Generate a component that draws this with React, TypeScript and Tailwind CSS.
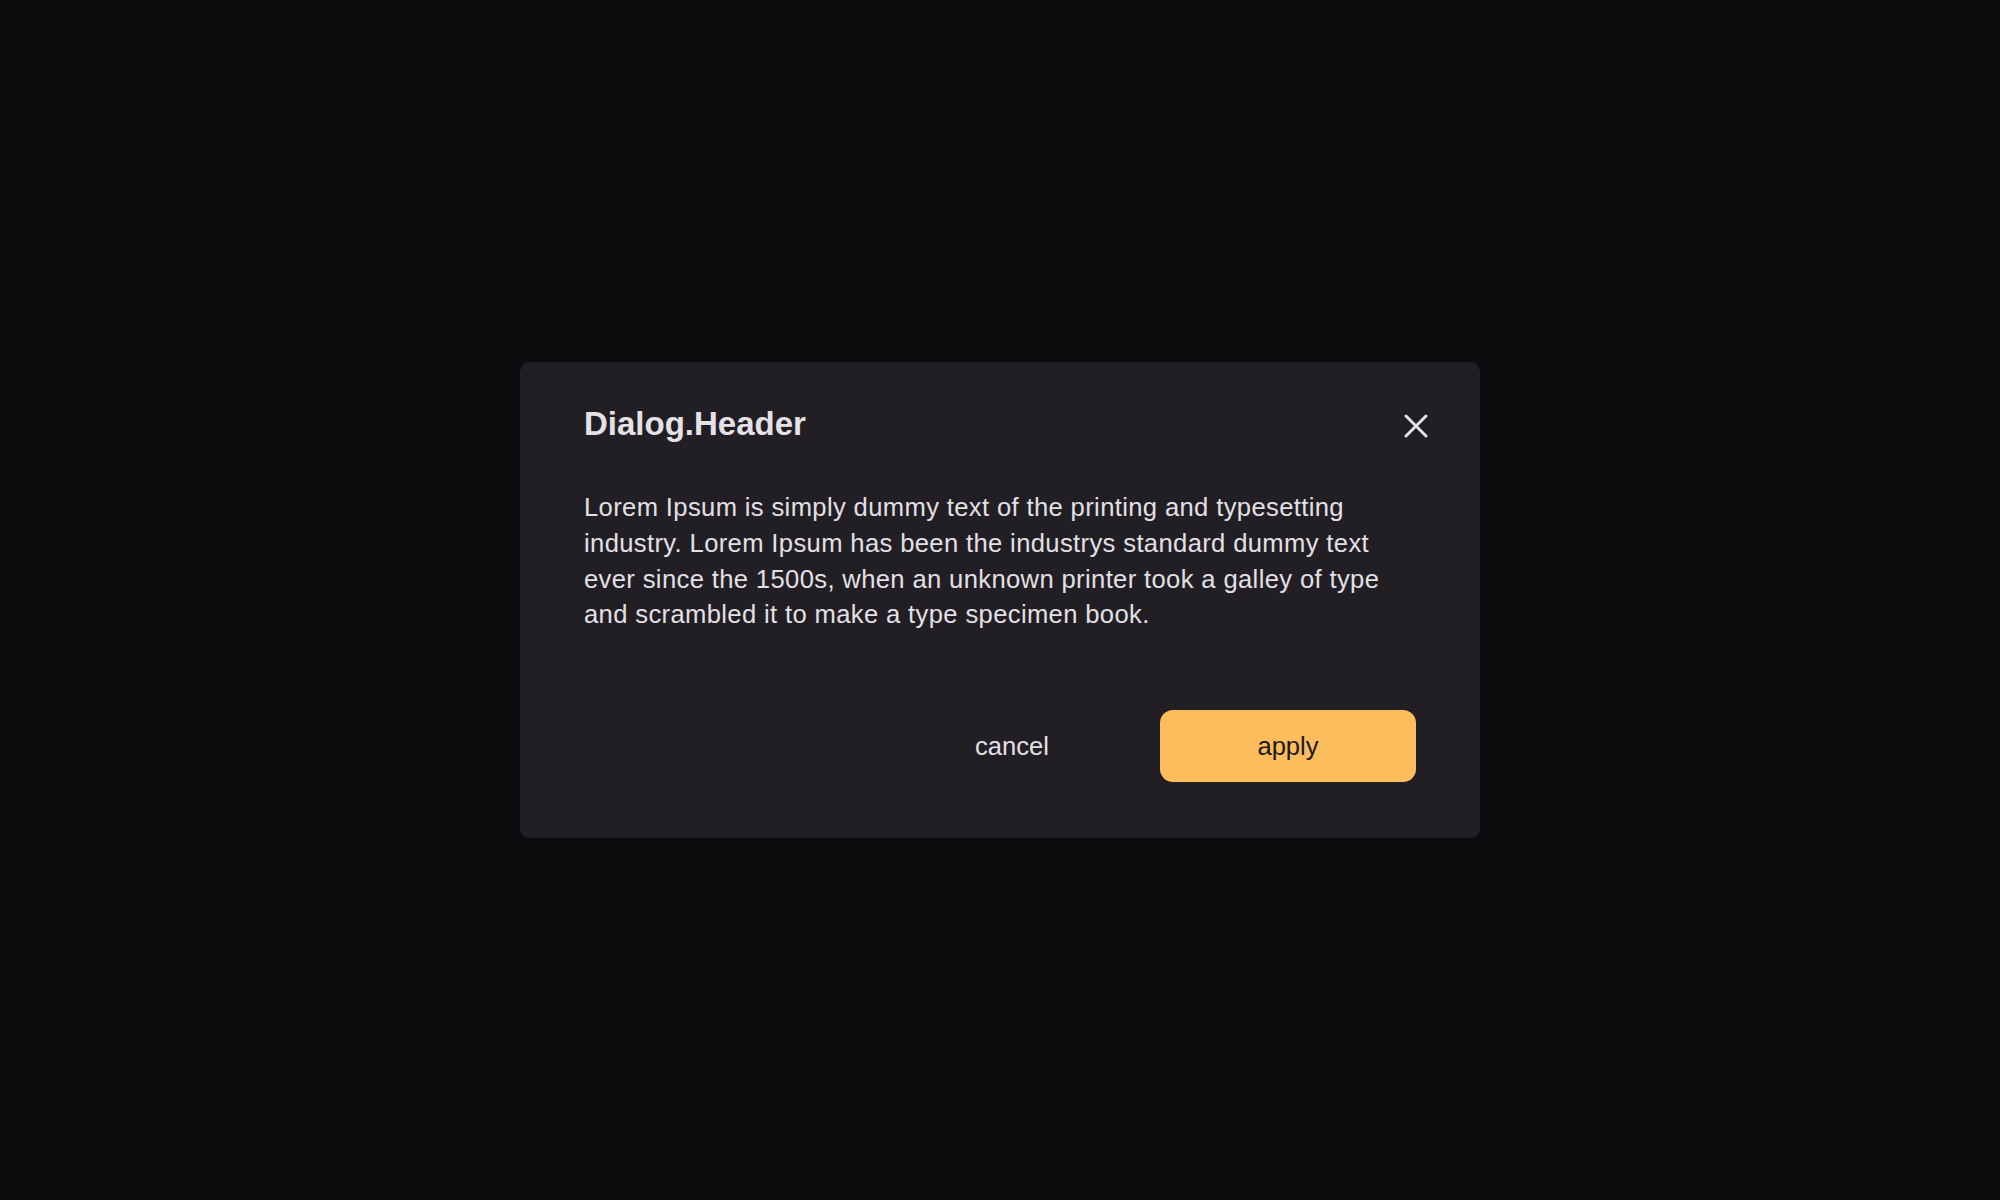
import React from "react";

const CloseIcon: React.FC = () => (
  <svg width="24" height="24" viewBox="0 0 24 24" fill="none" stroke="currentColor" strokeWidth="3" strokeLinecap="round">
    <path d="M2 2L22 22" />
    <path d="M22 2L2 22" />
  </svg>
);

export default function App() {
  return (
    <div
      className="flex h-[1200px] w-full items-center justify-center bg-[#0e0c0f] text-[#e2e0e5]"
      style={{ fontFamily: '"Liberation Sans", Arial, sans-serif' }}
    >
      {/* Dialog */}
      <div className="flex w-[960px] flex-col rounded-[10px] bg-[#221f24] px-16 pt-[42px] pb-14">
        {/* Header */}
        <div className="flex h-10 items-center justify-between">
          <h2 className="text-[33px] font-bold leading-10 text-[#e4e2e7]">Dialog.Header</h2>
          <button className="-mr-6 mt-1 flex h-12 w-12 items-center justify-center text-[#e4e2e7]">
            <CloseIcon />
          </button>
        </div>

        {/* Body */}
        <p className="mt-[46px] text-[25.6px] leading-[35.84px] tracking-[0.36px] text-[#e2e0e5]">
          Lorem Ipsum is simply dummy text of the printing and typesetting industry. Lorem Ipsum has been the
          industrys standard dummy text ever since the 1500s, when an unknown printer took a galley of type and
          scrambled it to make a type specimen book.
        </p>

        {/* Footer */}
        <div className="mt-[77px] flex justify-end gap-5">
          <button className="h-[72px] w-[256px] rounded-[13px] text-[25.6px] text-[#e2e0e5]">cancel</button>
          <button className="h-[72px] w-[256px] rounded-[13px] bg-[#febd5c] text-[25.6px] text-[#1b1a1c]">
            apply
          </button>
        </div>
      </div>
    </div>
  );
}
